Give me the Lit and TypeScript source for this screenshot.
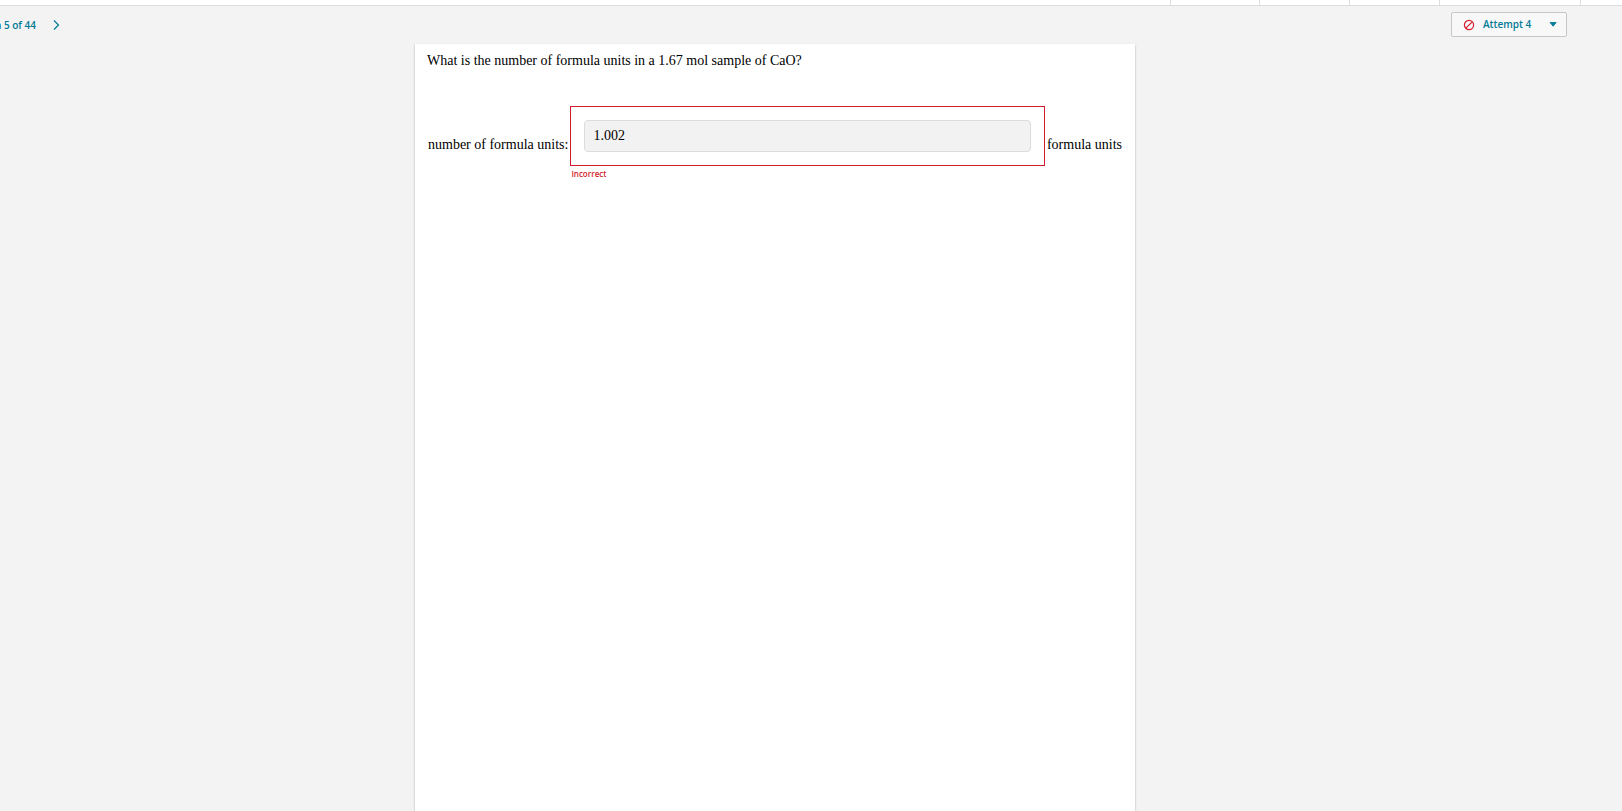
import { LitElement, html, css } from "lit";
import { customElement, state } from "lit/decorators.js";

@customElement("attempt-picker")
class AttemptPicker extends LitElement {
  static styles = css`
    :host {
      display: block;
    }
    .picker {
      display: grid;
      grid-template-columns: 31px 1fr 17px;
      align-items: center;
      box-sizing: border-box;
      width: 116px;
      height: 25px;
      border: 1px solid #c7c7c7;
      border-radius: 2px;
      background: #f8f8f8;
      color: #007a96;
    }
    .status,
    .caret {
      display: block;
      grid-row: 1;
      pointer-events: none;
    }
    .status {
      grid-column: 1;
      justify-self: end;
      width: 12px;
      height: 12px;
      margin-right: 8px;
    }
    .caret {
      grid-column: 3;
      width: 8px;
      height: 5px;
    }
    .select {
      grid-column: 1 / -1;
      grid-row: 1;
      width: 100%;
      height: 23px;
      margin: 0;
      padding: 0 18px 0 31px;
      border: 0;
      appearance: none;
      background: transparent;
      color: inherit;
      font: 600 10px/23px "Open Sans", sans-serif;
      cursor: pointer;
    }
  `;

  render() {
    return html`
      <div class="picker">
        <svg class="status" viewBox="0 0 12 12" aria-hidden="true">
          <circle cx="6" cy="6" r="4.6" fill="none" stroke="#d9192d" stroke-width="1.2" />
          <path d="M2.8 9.2 9.2 2.8" stroke="#d9192d" stroke-width="1.2" />
        </svg>
        <select class="select" aria-label="Attempt">
          <option>Attempt 1</option>
          <option>Attempt 2</option>
          <option>Attempt 3</option>
          <option selected>Attempt 4</option>
        </select>
        <svg class="caret" viewBox="0 0 8 5" aria-hidden="true">
          <path d="M1 0.5H7.2L4.1 4.2Z" fill="#007a96" stroke="#007a96" stroke-width=".8" stroke-linejoin="round" />
        </svg>
      </div>
    `;
  }
}

@customElement("app-root")
class AppRoot extends LitElement {
  static styles = css`
    :host {
      display: flex;
      flex-direction: column;
      min-height: 100vh;
      background: #f3f3f3;
      color: #000;
      font: 14px/18px "Liberation Serif", "Times New Roman", serif;
    }
    .tabs {
      display: flex;
      justify-content: flex-end;
      height: 5px;
      border-bottom: 1px solid #dcdcdc;
      background: #fff;
    }
    .tab {
      box-sizing: border-box;
      width: 90px;
      border-left: 1px solid #dcdcdc;
    }
    .tab.first {
      width: 89px;
    }
    .tab.wide {
      width: 141px;
    }
    .tab.last {
      width: 42px;
    }
    .toolbar {
      display: flex;
      justify-content: space-between;
      align-items: center;
      height: 38px;
      box-sizing: border-box;
      padding: 0 55px 1px 0;
    }
    .pager {
      display: flex;
      align-items: center;
      gap: 16px;
      color: #007a96;
      font: 600 10px/14px "Open Sans", sans-serif;
    }
    .position {
      display: flex;
      justify-content: flex-end;
      width: 36px;
      overflow: hidden;
      white-space: nowrap;
    }
    .next {
      display: block;
      padding: 0;
      border: 0;
      background: none;
      cursor: pointer;
    }
    .chevron {
      display: block;
      width: 9px;
      height: 12px;
    }
    .stage {
      display: flex;
      flex: 1;
      justify-content: center;
      padding-right: 72px;
    }
    .card {
      flex: 0 1 720px;
      box-sizing: border-box;
      padding: 8px 12px;
      background: #fff;
      box-shadow: 0 1px 2px rgba(0, 0, 0, 0.3);
    }
    .question {
      margin: 0 0 36px;
    }
    .answer {
      display: flex;
      align-items: center;
      gap: 2px;
      padding: 0 1px;
      white-space: nowrap;
    }
    .field {
      flex: 1;
      min-width: 0;
    }
    .frame {
      padding: 13px;
      border: 1px solid #d01c2a;
    }
    .input {
      display: block;
      box-sizing: border-box;
      width: 100%;
      height: 32px;
      padding: 0 8px;
      border: 1px solid #dcdcdc;
      border-radius: 4px;
      background: #f2f2f2;
      color: #000;
      font: inherit;
    }
    .verdict {
      margin: 0;
      padding: 1px 1px 3px;
      color: #d01c2a;
      font: 600 8px/14px "Open Sans", sans-serif;
    }
  `;

  @state() private answer = "1.002";

  render() {
    return html`
      <div class="tabs">
        <div class="tab first"></div>
        <div class="tab"></div>
        <div class="tab"></div>
        <div class="tab wide"></div>
        <div class="tab last"></div>
      </div>
      <header class="toolbar">
        <nav class="pager">
          <span class="position">Question 5 of 44</span>
          <button class="next" type="button" aria-label="Next question">
            <svg class="chevron" viewBox="0 0 9 12" aria-hidden="true">
              <path d="M2 1.5 6.5 6 2 10.5" fill="none" stroke="#007a96" stroke-width="1.2" />
            </svg>
          </button>
        </nav>
        <attempt-picker></attempt-picker>
      </header>
      <main class="stage">
        <section class="card">
          <p class="question">What is the number of formula units in a 1.67 mol sample of CaO?</p>
          <div class="answer">
            <label for="answer">number of formula units:</label>
            <div class="field">
              <div class="frame">
                <input id="answer" class="input" type="text" readonly .value=${this.answer} aria-describedby="verdict" />
              </div>
              <p id="verdict" class="verdict">Incorrect</p>
            </div>
            <span>formula units</span>
          </div>
        </section>
      </main>
    `;
  }
}
